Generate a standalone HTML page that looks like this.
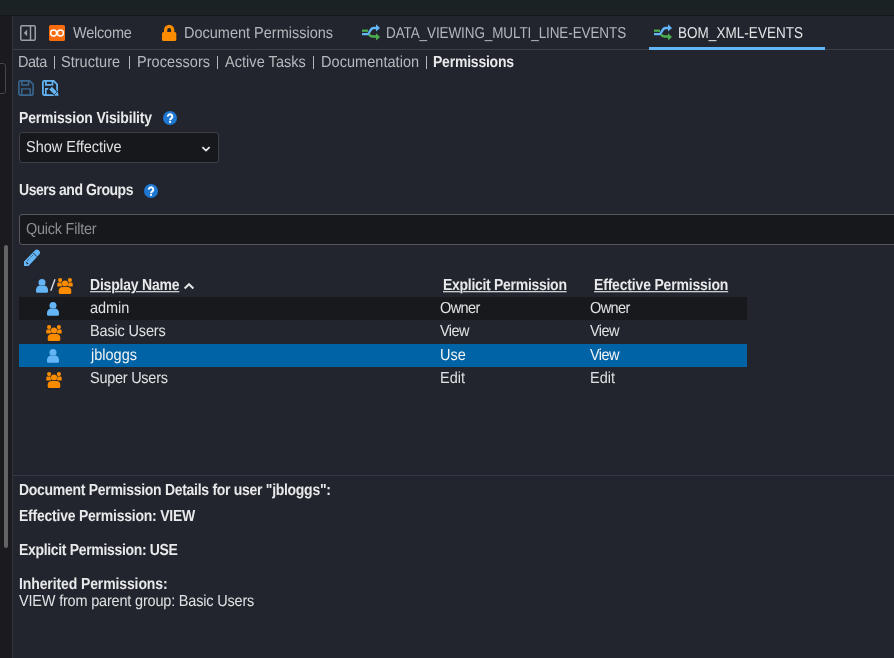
<!DOCTYPE html>
<html><head><meta charset="utf-8">
<style>
*{box-sizing:border-box}
html,body{margin:0;padding:0}
body{width:894px;height:658px;overflow:hidden;position:relative;background:#22252d;font-family:"Liberation Sans",sans-serif;font-size:14px;color:#dfe2e3}
.a{position:absolute}
.t{position:absolute;white-space:nowrap;line-height:16px;will-change:transform;text-rendering:geometricPrecision}
svg{position:absolute;overflow:visible}
</style></head><body>
<!-- top bar -->
<div class="a" style="left:0;top:0;width:894px;height:15px;background:#1b2224"></div>
<div class="a" style="left:0;top:15px;width:894px;height:1px;background:#141a1a"></div>
<!-- left panel -->
<div class="a" style="left:0;top:16px;width:12px;height:642px;background:#1b1a1f"></div>
<div class="a" style="left:-20px;top:63px;width:26px;height:31px;border:1px solid #47474b;border-radius:3px;background:#18171b"></div>
<div class="a" style="left:4px;top:245px;width:4px;height:303px;background:#646466;border-radius:2px"></div>
<div class="a" style="left:12px;top:16px;width:1px;height:642px;background:#31353f"></div>

<!-- tab bar -->
<div class="a" style="left:13px;top:49px;width:881px;height:1px;background:#3a3e46"></div>
<div class="a" style="left:649px;top:47px;width:176px;height:3px;background:#64b5f6"></div>

<!-- panel toggle icon -->
<svg style="left:20px;top:25px" width="16" height="16" viewBox="0 0 16 16">
<rect x="0.75" y="0.75" width="14.5" height="14.5" rx="1.2" fill="none" stroke="#9ca0a5" stroke-width="1.5"/>
<line x1="10.5" y1="1" x2="10.5" y2="15" stroke="#9ca0a4" stroke-width="1.5"/>
<polygon points="7.1,4.6 7.1,11.2 3.8,7.9" fill="#9ca0a5"/>
</svg>
<!-- welcome icon -->
<svg style="left:49px;top:25px" width="16" height="16" viewBox="0 0 16 16">
<rect x="0" y="0" width="16" height="16" rx="1.5" fill="#fa6b0c"/>
<circle cx="4.6" cy="8" r="3" fill="none" stroke="#fff" stroke-width="1.4"/>
<circle cx="11.4" cy="8" r="3" fill="none" stroke="#fff" stroke-width="1.4"/>
</svg>
<!-- lock -->
<svg style="left:162px;top:24px" width="15" height="17" viewBox="0 0 15 17">
<path d="M3.6,9 V5.94 A3.55,3.55 0 0 1 10.7,5.94 V9" fill="none" stroke="#fb8c00" stroke-width="3.3"/>
<rect x="0" y="8" width="14.3" height="9.1" rx="1.6" fill="#fb8c00"/>
</svg>
<!-- shuffle icons -->
<svg style="left:362px;top:24px" width="19" height="17" viewBox="0 0 19 17">
<rect x="0" y="5.6" width="6" height="2.2" fill="#4caf50"/>
<path d="M7,10.3 C8,12.2 9,12.5 11,12.5 H14.5" fill="none" stroke="#4caf50" stroke-width="2.4"/>
<polygon points="14,9.3 18,13 14,16.5" fill="#4caf50"/>
<path d="M0,10.1 H5.5 C7.5,10.1 8,4 11.5,4 H14.5" fill="none" stroke="#64b5f6" stroke-width="2.4"/>
<polygon points="14,0.2 18,4 14,7.4" fill="#64b5f6"/>
</svg>
<svg style="left:654px;top:24px" width="19" height="17" viewBox="0 0 19 17">
<rect x="0" y="5.6" width="6" height="2.2" fill="#4caf50"/>
<path d="M7,10.3 C8,12.2 9,12.5 11,12.5 H14.5" fill="none" stroke="#4caf50" stroke-width="2.4"/>
<polygon points="14,9.3 18,13 14,16.5" fill="#4caf50"/>
<path d="M0,10.1 H5.5 C7.5,10.1 8,4 11.5,4 H14.5" fill="none" stroke="#64b5f6" stroke-width="2.4"/>
<polygon points="14,0.2 18,4 14,7.4" fill="#64b5f6"/>
</svg>

<!-- nav bars -->
<div class="a" style="left:54px;top:56px;width:1px;height:13px;background:#b2b6b9"></div>
<div class="a" style="left:129px;top:56px;width:1px;height:13px;background:#b2b6b9"></div>
<div class="a" style="left:217px;top:56px;width:1px;height:13px;background:#b2b6b9"></div>
<div class="a" style="left:313px;top:56px;width:1px;height:13px;background:#b2b6b9"></div>
<div class="a" style="left:426px;top:56px;width:1px;height:13px;background:#b2b6b9"></div>
<!-- save icons -->
<svg style="left:18px;top:80px" width="16" height="16" viewBox="0 0 16 16">
<path d="M2.4,0.9 H11.7 L15.1,4.3 V13.6 A1.5,1.5 0 0 1 13.6,15.1 H2.4 A1.5,1.5 0 0 1 0.9,13.6 V2.4 A1.5,1.5 0 0 1 2.4,0.9 Z" fill="none" stroke="#3a6791" stroke-width="1.6"/>
<path d="M3.9,1 V4.9 H10.5 V1" fill="none" stroke="#3a6791" stroke-width="1.55"/>
<path d="M3.8,15 V8.85 H12.2 V15" fill="none" stroke="#3a6791" stroke-width="1.45"/>
</svg>
<svg style="left:42px;top:80px" width="16" height="16" viewBox="0 0 16 16">
<path d="M2.4,0.9 H11.7 L15.1,4.3 V13.6 A1.5,1.5 0 0 1 13.6,15.1 H2.4 A1.5,1.5 0 0 1 0.9,13.6 V2.4 A1.5,1.5 0 0 1 2.4,0.9 Z" fill="none" stroke="#64b5f6" stroke-width="1.75"/>
<path d="M3.9,1 V4.9 H10.5 V1" fill="none" stroke="#64b5f6" stroke-width="1.7"/>
<path d="M3.8,15 V8.85 H7" fill="none" stroke="#64b5f6" stroke-width="1.6"/>
<path d="M7.6,7.2 L16.2,15.8" stroke="#22252d" stroke-width="5.6"/>
<path d="M8.6,8.2 L14.9,14.5" stroke="#64b5f6" stroke-width="3.8"/>
<polygon points="12.2,15.3 15.8,11.7 16.6,16.1" fill="#64b5f6"/>
<path d="M12.4,14.6 L15.1,11.9" stroke="#22252d" stroke-width="0.7"/>
</svg>
<!-- help icons -->
<svg style="left:163px;top:111px" width="14" height="14" viewBox="0 0 14 14">
<circle cx="7" cy="7" r="7" fill="#1e78d2"/>
<path d="M4.8,5.6 A2.25,2.15 0 1 1 8.5,7.1 C7.6,7.7 7.05,8.1 7.05,9.3" fill="none" stroke="#fff" stroke-width="2"/>
<rect x="6.05" y="10" width="2" height="1.8" fill="#fff"/>
</svg>
<svg style="left:144px;top:184px" width="14" height="14" viewBox="0 0 14 14">
<circle cx="7" cy="7" r="7" fill="#1e78d2"/>
<path d="M4.8,5.6 A2.25,2.15 0 1 1 8.5,7.1 C7.6,7.7 7.05,8.1 7.05,9.3" fill="none" stroke="#fff" stroke-width="2"/>
<rect x="6.05" y="10" width="2" height="1.8" fill="#fff"/>
</svg>

<!-- select -->
<div class="a" style="left:19px;top:132px;width:200px;height:31px;background:#17181c;border:1px solid #3e4047;border-radius:3px"></div>
<svg style="left:201px;top:145px" width="10" height="7" viewBox="0 0 10 7">
<path d="M1.4,2.2 L5,5.6 L8.6,2.2" fill="none" stroke="#e8eaeb" stroke-width="1.8"/>
</svg>

<!-- quick filter -->
<div class="a" style="left:19px;top:214px;width:900px;height:31px;background:#17181c;border:1px solid #55575b;border-radius:3px"></div>

<!-- pencil -->
<svg style="left:24px;top:250px" width="16" height="16" viewBox="0 0 16 16">
<path d="M0,11.4 L10.8,0.6 A2.9,2.9 0 0 1 15,4.8 L4.5,16 H0 Z" fill="#64b5f6"/>
<path d="M9.2,2.9 L13.1,6.8" stroke="#22252d" stroke-width="0.9"/>
<path d="M8.8,5.2 L2.6,11.4" stroke="#22252d" stroke-width="0.8" stroke-dasharray="0.9,0.9"/>
<path d="M2.3,12.3 L4,14" stroke="#22252d" stroke-width="1.2"/>
</svg>
<!-- header icons -->
<svg style="left:36px;top:279px" width="12" height="14" viewBox="0 0 12 14"><g fill="#64b5f6"><circle cx="6" cy="3.6" r="3.5"/>
<path d="M0,12.2 V10.9 C0,8.2 2,6.6 4,6.6 H8 C10,6.6 12,8.2 12,10.9 V12.2 A1.6,1.6 0 0 1 10.4,13.8 H1.6 A1.6,1.6 0 0 1 0,12.2 Z" stroke="#22252d" stroke-width="0.7" paint-order="stroke"/></g></svg>
<svg style="left:49px;top:278px" width="8" height="14" viewBox="0 0 8 14"><path d="M6,1.2 L1.8,12.8" stroke="#dadddd" stroke-width="1.4"/></svg>
<svg style="left:57px;top:278px" width="16" height="16" viewBox="0 0 16 16"><g fill="#fb8c00">
<circle cx="3.1" cy="2.1" r="2.1"/><circle cx="12.9" cy="2.1" r="2.1"/>
<path d="M0.3,8.6 V5.9 C0.3,5 0.9,4.5 1.8,4.5 H5.2 V8.6 Z"/><path d="M15.7,8.6 V5.9 C15.7,5 15.1,4.5 14.2,4.5 H10.8 V8.6 Z"/>
<circle cx="8" cy="5.5" r="3.1" stroke="#22252d" stroke-width="0.9" paint-order="stroke"/>
<path d="M1.7,14.4 V12.5 C1.7,10.2 3.4,8.9 5.4,8.9 H10.6 C12.6,8.9 14.3,10.2 14.3,12.5 V14.4 A1.6,1.6 0 0 1 12.7,16 H3.3 A1.6,1.6 0 0 1 1.7,14.4 Z" stroke="#22252d" stroke-width="0.9" paint-order="stroke"/>
</g></svg>
<svg style="left:183px;top:282px" width="12" height="8" viewBox="0 0 12 8">
<path d="M1.6,6.5 L6,2.2 L10.4,6.5" fill="none" stroke="#e0e3e3" stroke-width="2.1"/>
</svg>

<!-- rows -->
<div class="a" style="left:19px;top:297px;width:728px;height:23px;background:#18191d"></div>
<div class="a" style="left:19px;top:343.5px;width:728px;height:23.5px;background:#0063a6"></div>

<svg style="left:47px;top:302px" width="12" height="14" viewBox="0 0 12 14"><g fill="#64b5f6"><circle cx="6" cy="3.6" r="3.5"/>
<path d="M0,12.2 V10.9 C0,8.2 2,6.6 4,6.6 H8 C10,6.6 12,8.2 12,10.9 V12.2 A1.6,1.6 0 0 1 10.4,13.8 H1.6 A1.6,1.6 0 0 1 0,12.2 Z" stroke="#18191d" stroke-width="0.7" paint-order="stroke"/></g></svg>
<svg style="left:45.6px;top:325px" width="16" height="16" viewBox="0 0 16 16"><g fill="#fb8c00">
<circle cx="3.1" cy="2.1" r="2.1"/><circle cx="12.9" cy="2.1" r="2.1"/>
<path d="M0.3,8.6 V5.9 C0.3,5 0.9,4.5 1.8,4.5 H5.2 V8.6 Z"/><path d="M15.7,8.6 V5.9 C15.7,5 15.1,4.5 14.2,4.5 H10.8 V8.6 Z"/>
<circle cx="8" cy="5.5" r="3.1" stroke="#22252d" stroke-width="0.9" paint-order="stroke"/>
<path d="M1.7,14.4 V12.5 C1.7,10.2 3.4,8.9 5.4,8.9 H10.6 C12.6,8.9 14.3,10.2 14.3,12.5 V14.4 A1.6,1.6 0 0 1 12.7,16 H3.3 A1.6,1.6 0 0 1 1.7,14.4 Z" stroke="#22252d" stroke-width="0.9" paint-order="stroke"/>
</g></svg>
<svg style="left:47px;top:349px" width="12" height="14" viewBox="0 0 12 14"><g fill="#64b5f6"><circle cx="6" cy="3.6" r="3.5"/>
<path d="M0,12.2 V10.9 C0,8.2 2,6.6 4,6.6 H8 C10,6.6 12,8.2 12,10.9 V12.2 A1.6,1.6 0 0 1 10.4,13.8 H1.6 A1.6,1.6 0 0 1 0,12.2 Z" stroke="#0063a6" stroke-width="0.7" paint-order="stroke"/></g></svg>
<svg style="left:45.6px;top:372px" width="16" height="16" viewBox="0 0 16 16"><g fill="#fb8c00">
<circle cx="3.1" cy="2.1" r="2.1"/><circle cx="12.9" cy="2.1" r="2.1"/>
<path d="M0.3,8.6 V5.9 C0.3,5 0.9,4.5 1.8,4.5 H5.2 V8.6 Z"/><path d="M15.7,8.6 V5.9 C15.7,5 15.1,4.5 14.2,4.5 H10.8 V8.6 Z"/>
<circle cx="8" cy="5.5" r="3.1" stroke="#22252d" stroke-width="0.9" paint-order="stroke"/>
<path d="M1.7,14.4 V12.5 C1.7,10.2 3.4,8.9 5.4,8.9 H10.6 C12.6,8.9 14.3,10.2 14.3,12.5 V14.4 A1.6,1.6 0 0 1 12.7,16 H3.3 A1.6,1.6 0 0 1 1.7,14.4 Z" stroke="#22252d" stroke-width="0.9" paint-order="stroke"/>
</g></svg>

<!-- divider -->
<div class="a" style="left:13px;top:475px;width:881px;height:1px;background:#353945"></div>

<div class="t" style="left:72.5px;top:25.7px;font-size:14.5px;color:#b3b7ba;letter-spacing:-0.22px;transform:scaleY(1.1);transform-origin:0 13px">Welcome</div>
<div class="t" style="left:183.5px;top:25.7px;font-size:14.5px;color:#b3b7ba;transform:scaleY(1.1);transform-origin:0 13px">Document Permissions</div>
<div class="t" style="left:386.0px;top:25.7px;font-size:13.5px;color:#b3b7ba;letter-spacing:-0.10px;transform:scaleY(1.17);transform-origin:0 13px">DATA_VIEWING_MULTI_LINE-EVENTS</div>
<div class="t" style="left:677.6px;top:25.7px;font-size:13.5px;color:#e3e6e7;letter-spacing:0.04px;transform:scaleY(1.17);transform-origin:0 13px">BOM_XML-EVENTS</div>
<div class="t" style="left:17.5px;top:55.2px;font-size:14.5px;color:#b6babd;letter-spacing:-0.47px;transform:scaleY(1.1);transform-origin:0 13px">Data</div>
<div class="t" style="left:61.1px;top:55.2px;font-size:14.5px;color:#b6babd;letter-spacing:0.03px;transform:scaleY(1.1);transform-origin:0 13px">Structure</div>
<div class="t" style="left:136.5px;top:55.2px;font-size:14.5px;color:#b6babd;letter-spacing:0.06px;transform:scaleY(1.1);transform-origin:0 13px">Processors</div>
<div class="t" style="left:225.0px;top:55.2px;font-size:14.5px;color:#b6babd;letter-spacing:0.05px;transform:scaleY(1.1);transform-origin:0 13px">Active Tasks</div>
<div class="t" style="left:320.7px;top:55.2px;font-size:14.5px;color:#b6babd;letter-spacing:0.05px;transform:scaleY(1.1);transform-origin:0 13px">Documentation</div>
<div class="t" style="left:433.4px;top:54.2px;font-size:14px;color:#e7e9ea;font-weight:700;letter-spacing:-0.22px;transform:scaleY(1.14);transform-origin:0 13px">Permissions</div>
<div class="t" style="left:18.6px;top:109.7px;font-size:14px;color:#e7e9ea;font-weight:700;letter-spacing:-0.18px;transform:scaleY(1.14);transform-origin:0 13px">Permission Visibility</div>
<div class="t" style="left:19.4px;top:181.8px;font-size:14px;color:#e7e9ea;font-weight:700;letter-spacing:-0.46px;transform:scaleY(1.14);transform-origin:0 13px">Users and Groups</div>
<div class="t" style="left:26.2px;top:140.1px;font-size:14.5px;color:#dfe2e3;transform:scaleY(1.1);transform-origin:0 13px">Show Effective</div>
<div class="t" style="left:25.9px;top:222.1px;font-size:14.5px;color:#8c8e91;letter-spacing:-0.25px;transform:scaleY(1.1);transform-origin:0 13px">Quick Filter</div>
<div class="t" style="left:90.3px;top:276.8px;font-size:14px;color:#e7e9ea;font-weight:700;letter-spacing:-0.21px;transform:scaleY(1.14);transform-origin:0 13px;text-decoration:underline;text-underline-offset:0.5px;text-decoration-thickness:1px">Display Name</div>
<div class="t" style="left:443.2px;top:276.8px;font-size:14px;color:#e7e9ea;font-weight:700;letter-spacing:-0.29px;transform:scaleY(1.14);transform-origin:0 13px;text-decoration:underline;text-underline-offset:0.5px;text-decoration-thickness:1px">Explicit Permission</div>
<div class="t" style="left:593.5px;top:276.8px;font-size:14px;color:#e7e9ea;font-weight:700;letter-spacing:-0.18px;transform:scaleY(1.14);transform-origin:0 13px;text-decoration:underline;text-underline-offset:0.5px;text-decoration-thickness:1px">Effective Permission</div>
<div class="t" style="left:90.0px;top:300.8px;font-size:14.5px;color:#dfe2e3;letter-spacing:-0.03px;transform:scaleY(1.1);transform-origin:0 13px">admin</div>
<div class="t" style="left:89.6px;top:323.9px;font-size:14.5px;color:#dfe2e3;letter-spacing:-0.16px;transform:scaleY(1.1);transform-origin:0 13px">Basic Users</div>
<div class="t" style="left:90.6px;top:347.5px;font-size:14.5px;color:#f2f4f5;transform:scaleY(1.1);transform-origin:0 13px">jbloggs</div>
<div class="t" style="left:89.6px;top:370.9px;font-size:14.5px;color:#dfe2e3;letter-spacing:-0.26px;transform:scaleY(1.1);transform-origin:0 13px">Super Users</div>
<div class="t" style="left:439.5px;top:301.1px;font-size:14.5px;color:#dfe2e3;letter-spacing:-0.62px;transform:scaleY(1.1);transform-origin:0 13px">Owner</div>
<div class="t" style="left:439.5px;top:324.0px;font-size:14.5px;color:#dfe2e3;letter-spacing:-0.60px;transform:scaleY(1.1);transform-origin:0 13px">View</div>
<div class="t" style="left:439.5px;top:347.5px;font-size:14.5px;color:#f2f4f5;transform:scaleY(1.1);transform-origin:0 13px">Use</div>
<div class="t" style="left:439.5px;top:370.9px;font-size:14.5px;color:#dfe2e3;transform:scaleY(1.1);transform-origin:0 13px">Edit</div>
<div class="t" style="left:589.5px;top:301.1px;font-size:14.5px;color:#dfe2e3;letter-spacing:-0.62px;transform:scaleY(1.1);transform-origin:0 13px">Owner</div>
<div class="t" style="left:589.5px;top:324.0px;font-size:14.5px;color:#dfe2e3;letter-spacing:-0.60px;transform:scaleY(1.1);transform-origin:0 13px">View</div>
<div class="t" style="left:589.5px;top:347.5px;font-size:14.5px;color:#f2f4f5;letter-spacing:-0.60px;transform:scaleY(1.1);transform-origin:0 13px">View</div>
<div class="t" style="left:589.5px;top:370.9px;font-size:14.5px;color:#dfe2e3;transform:scaleY(1.1);transform-origin:0 13px">Edit</div>
<div class="t" style="left:19.0px;top:481.6px;font-size:14px;color:#e7e9ea;font-weight:700;letter-spacing:-0.29px;transform:scaleY(1.14);transform-origin:0 13px">Document Permission Details for user &quot;jbloggs&quot;:</div>
<div class="t" style="left:19.0px;top:508.2px;font-size:14px;color:#e7e9ea;font-weight:700;letter-spacing:-0.23px;transform:scaleY(1.14);transform-origin:0 13px">Effective Permission: VIEW</div>
<div class="t" style="left:19.0px;top:541.9px;font-size:14px;color:#e7e9ea;font-weight:700;letter-spacing:-0.33px;transform:scaleY(1.14);transform-origin:0 13px">Explicit Permission: USE</div>
<div class="t" style="left:19.0px;top:575.6px;font-size:14px;color:#e7e9ea;font-weight:700;letter-spacing:-0.11px;transform:scaleY(1.14);transform-origin:0 13px">Inherited Permissions:</div>
<div class="t" style="left:19.2px;top:593.5px;font-size:14.5px;color:#dfe2e3;letter-spacing:-0.19px;transform:scaleY(1.1);transform-origin:0 13px">VIEW from parent group: Basic Users</div>
</body></html>
